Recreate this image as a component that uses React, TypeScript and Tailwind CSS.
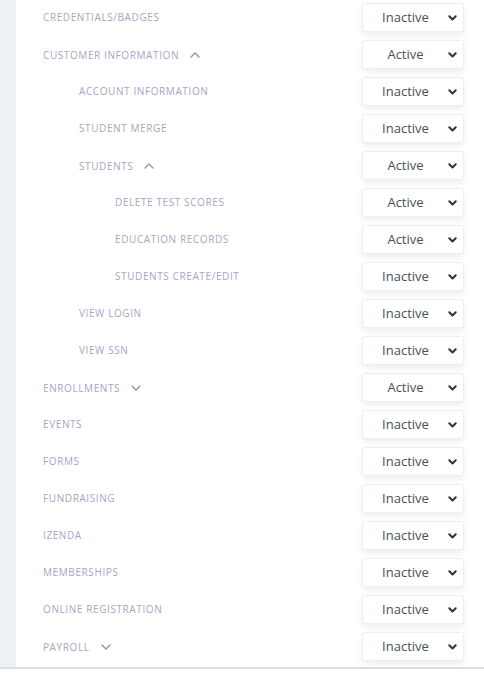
import React from 'react';

type Row = {
  label: string;
  level: number;
  status: 'Active' | 'Inactive';
  toggle?: 'up' | 'down';
};

const rows: Row[] = [
  { label: 'Credentials/Badges', level: 0, status: 'Inactive' },
  { label: 'Customer Information', level: 0, status: 'Active', toggle: 'up' },
  { label: 'Account Information', level: 1, status: 'Inactive' },
  { label: 'Student Merge', level: 1, status: 'Inactive' },
  { label: 'Students', level: 1, status: 'Active', toggle: 'up' },
  { label: 'Delete Test Scores', level: 2, status: 'Active' },
  { label: 'Education Records', level: 2, status: 'Active' },
  { label: 'Students Create/Edit', level: 2, status: 'Inactive' },
  { label: 'View Login', level: 1, status: 'Inactive' },
  { label: 'View SSN', level: 1, status: 'Inactive' },
  { label: 'Enrollments', level: 0, status: 'Active', toggle: 'down' },
  { label: 'Events', level: 0, status: 'Inactive' },
  { label: 'Forms', level: 0, status: 'Inactive' },
  { label: 'Fundraising', level: 0, status: 'Inactive' },
  { label: 'Izenda', level: 0, status: 'Inactive' },
  { label: 'Memberships', level: 0, status: 'Inactive' },
  { label: 'Online Registration', level: 0, status: 'Inactive' },
  { label: 'Payroll', level: 0, status: 'Inactive', toggle: 'down' },
];

const indent = ['pl-[27px]', 'pl-[63px]', 'pl-[99px]'];

/** Thin caret shown after a group label. */
function Caret({ dir }: { dir: 'up' | 'down' }) {
  return (
    <svg width="10" height="6" viewBox="0 0 10 6" className="ml-[11px] mt-[1px]" fill="none">
      <path
        d={dir === 'up' ? 'M1 5 L5 1 L9 5' : 'M1 1 L5 5 L9 1'}
        stroke="#8f95ae"
        strokeWidth="1.4"
        strokeLinecap="round"
        strokeLinejoin="round"
      />
    </svg>
  );
}

/** Status dropdown, drawn as a closed select. */
function StatusSelect({ value }: { value: string }) {
  return (
    <div className="relative flex h-[29px] w-[102px] items-center rounded-[3px] border border-[#eceef1] bg-white shadow-[0_3px_6px_rgba(0,0,0,0.07)]">
      <span className="flex-1 pr-[15px] text-center text-[13px] text-[#46505c]">{value}</span>
      <svg width="9" height="6" viewBox="0 0 9 6" className="absolute right-[6px] top-[11px]" fill="none">
        <path d="M1.3 1.3 L4.5 4.5 L7.7 1.3" stroke="#2f3338" strokeWidth="2" strokeLinecap="round" strokeLinejoin="round" />
      </svg>
    </div>
  );
}

export default function App() {
  return (
    <div className="bg-white font-['Open_Sans',sans-serif]">
      <div className="flex h-[669px] border-b-2 border-[#dedede]">
        <div className="w-[16px] shrink-0 bg-[#eef1f6]" />
        <div className="flex-1 pt-[3px]">
          {rows.map((r) => (
            <div key={r.label} className="flex h-[37px] items-start pr-[20px]">
              <div className={`flex h-[29px] flex-1 items-center ${indent[r.level]}`}>
                <span
                  className={`text-[10px] uppercase tracking-[0.6px] text-[#a2a8c2] ${r.toggle ? 'mt-[2px]' : ''}`}
                >
                  {r.label}
                </span>
                {r.toggle && <Caret dir={r.toggle} />}
              </div>
              <StatusSelect value={r.status} />
            </div>
          ))}
        </div>
      </div>
    </div>
  );
}
